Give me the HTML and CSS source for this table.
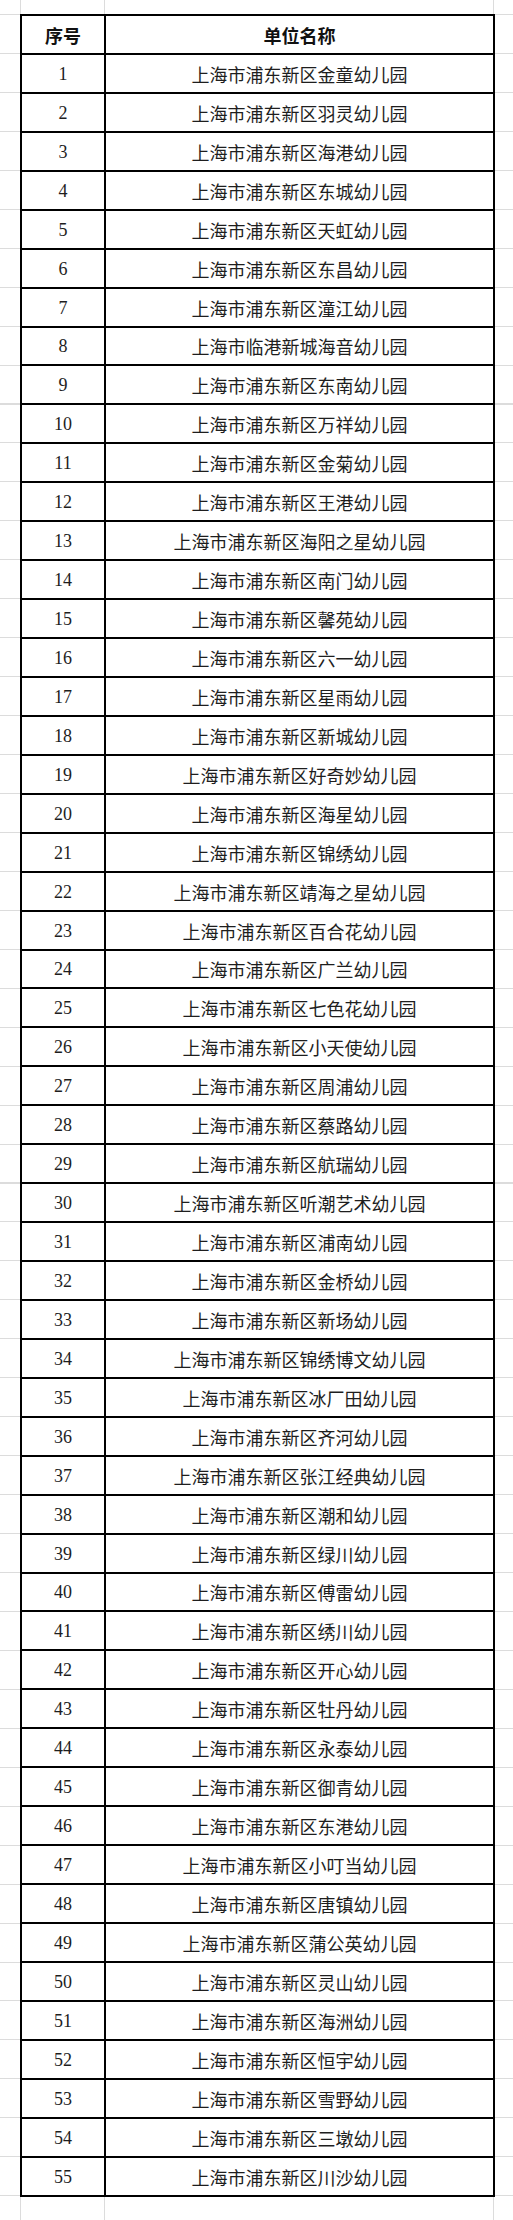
FILE: index.html
```html
<!DOCTYPE html>
<html lang="zh-CN">
<head>
<meta charset="utf-8">
<title>单位名称</title>
<link rel="stylesheet" href="styles.css">
</head>
<body>
<div class="sheet">
  <div class="table">
    <div class="row head"><div class="cell num">序号</div><div class="cell name">单位名称</div></div>
    <div class="row"><div class="cell num">1</div><div class="cell name">上海市浦东新区金童幼儿园</div></div>
    <div class="row"><div class="cell num">2</div><div class="cell name">上海市浦东新区羽灵幼儿园</div></div>
    <div class="row"><div class="cell num">3</div><div class="cell name">上海市浦东新区海港幼儿园</div></div>
    <div class="row"><div class="cell num">4</div><div class="cell name">上海市浦东新区东城幼儿园</div></div>
    <div class="row"><div class="cell num">5</div><div class="cell name">上海市浦东新区天虹幼儿园</div></div>
    <div class="row"><div class="cell num">6</div><div class="cell name">上海市浦东新区东昌幼儿园</div></div>
    <div class="row"><div class="cell num">7</div><div class="cell name">上海市浦东新区潼江幼儿园</div></div>
    <div class="row"><div class="cell num">8</div><div class="cell name">上海市临港新城海音幼儿园</div></div>
    <div class="row"><div class="cell num">9</div><div class="cell name">上海市浦东新区东南幼儿园</div></div>
    <div class="row"><div class="cell num">10</div><div class="cell name">上海市浦东新区万祥幼儿园</div></div>
    <div class="row"><div class="cell num">11</div><div class="cell name">上海市浦东新区金菊幼儿园</div></div>
    <div class="row"><div class="cell num">12</div><div class="cell name">上海市浦东新区王港幼儿园</div></div>
    <div class="row"><div class="cell num">13</div><div class="cell name">上海市浦东新区海阳之星幼儿园</div></div>
    <div class="row"><div class="cell num">14</div><div class="cell name">上海市浦东新区南门幼儿园</div></div>
    <div class="row"><div class="cell num">15</div><div class="cell name">上海市浦东新区馨苑幼儿园</div></div>
    <div class="row"><div class="cell num">16</div><div class="cell name">上海市浦东新区六一幼儿园</div></div>
    <div class="row"><div class="cell num">17</div><div class="cell name">上海市浦东新区星雨幼儿园</div></div>
    <div class="row"><div class="cell num">18</div><div class="cell name">上海市浦东新区新城幼儿园</div></div>
    <div class="row"><div class="cell num">19</div><div class="cell name">上海市浦东新区好奇妙幼儿园</div></div>
    <div class="row"><div class="cell num">20</div><div class="cell name">上海市浦东新区海星幼儿园</div></div>
    <div class="row"><div class="cell num">21</div><div class="cell name">上海市浦东新区锦绣幼儿园</div></div>
    <div class="row"><div class="cell num">22</div><div class="cell name">上海市浦东新区靖海之星幼儿园</div></div>
    <div class="row"><div class="cell num">23</div><div class="cell name">上海市浦东新区百合花幼儿园</div></div>
    <div class="row"><div class="cell num">24</div><div class="cell name">上海市浦东新区广兰幼儿园</div></div>
    <div class="row"><div class="cell num">25</div><div class="cell name">上海市浦东新区七色花幼儿园</div></div>
    <div class="row"><div class="cell num">26</div><div class="cell name">上海市浦东新区小天使幼儿园</div></div>
    <div class="row"><div class="cell num">27</div><div class="cell name">上海市浦东新区周浦幼儿园</div></div>
    <div class="row"><div class="cell num">28</div><div class="cell name">上海市浦东新区蔡路幼儿园</div></div>
    <div class="row"><div class="cell num">29</div><div class="cell name">上海市浦东新区航瑞幼儿园</div></div>
    <div class="row"><div class="cell num">30</div><div class="cell name">上海市浦东新区听潮艺术幼儿园</div></div>
    <div class="row"><div class="cell num">31</div><div class="cell name">上海市浦东新区浦南幼儿园</div></div>
    <div class="row"><div class="cell num">32</div><div class="cell name">上海市浦东新区金桥幼儿园</div></div>
    <div class="row"><div class="cell num">33</div><div class="cell name">上海市浦东新区新场幼儿园</div></div>
    <div class="row"><div class="cell num">34</div><div class="cell name">上海市浦东新区锦绣博文幼儿园</div></div>
    <div class="row"><div class="cell num">35</div><div class="cell name">上海市浦东新区冰厂田幼儿园</div></div>
    <div class="row"><div class="cell num">36</div><div class="cell name">上海市浦东新区齐河幼儿园</div></div>
    <div class="row"><div class="cell num">37</div><div class="cell name">上海市浦东新区张江经典幼儿园</div></div>
    <div class="row"><div class="cell num">38</div><div class="cell name">上海市浦东新区潮和幼儿园</div></div>
    <div class="row"><div class="cell num">39</div><div class="cell name">上海市浦东新区绿川幼儿园</div></div>
    <div class="row"><div class="cell num">40</div><div class="cell name">上海市浦东新区傅雷幼儿园</div></div>
    <div class="row"><div class="cell num">41</div><div class="cell name">上海市浦东新区绣川幼儿园</div></div>
    <div class="row"><div class="cell num">42</div><div class="cell name">上海市浦东新区开心幼儿园</div></div>
    <div class="row"><div class="cell num">43</div><div class="cell name">上海市浦东新区牡丹幼儿园</div></div>
    <div class="row"><div class="cell num">44</div><div class="cell name">上海市浦东新区永泰幼儿园</div></div>
    <div class="row"><div class="cell num">45</div><div class="cell name">上海市浦东新区御青幼儿园</div></div>
    <div class="row"><div class="cell num">46</div><div class="cell name">上海市浦东新区东港幼儿园</div></div>
    <div class="row"><div class="cell num">47</div><div class="cell name">上海市浦东新区小叮当幼儿园</div></div>
    <div class="row"><div class="cell num">48</div><div class="cell name">上海市浦东新区唐镇幼儿园</div></div>
    <div class="row"><div class="cell num">49</div><div class="cell name">上海市浦东新区蒲公英幼儿园</div></div>
    <div class="row"><div class="cell num">50</div><div class="cell name">上海市浦东新区灵山幼儿园</div></div>
    <div class="row"><div class="cell num">51</div><div class="cell name">上海市浦东新区海洲幼儿园</div></div>
    <div class="row"><div class="cell num">52</div><div class="cell name">上海市浦东新区恒宇幼儿园</div></div>
    <div class="row"><div class="cell num">53</div><div class="cell name">上海市浦东新区雪野幼儿园</div></div>
    <div class="row"><div class="cell num">54</div><div class="cell name">上海市浦东新区三墩幼儿园</div></div>
    <div class="row"><div class="cell num">55</div><div class="cell name">上海市浦东新区川沙幼儿园</div></div>
  </div>
</div>
</body>
</html>
```
FILE: styles.css
```css
html, body {
  margin: 0;
  padding: 0;
}

body {
  min-height: 2220px;
  background-color: #ffffff;
  background-image:
    linear-gradient(to right,
      transparent 20px, #dcdcdc 20px, #dcdcdc 21px, transparent 21px,
      transparent 104px, #dcdcdc 104px, #dcdcdc 105px, transparent 105px,
      transparent 493px, #dcdcdc 493px, #dcdcdc 494px, transparent 494px),
    repeating-linear-gradient(to bottom,
      #dcdcdc -24.95px, #dcdcdc -23.95px, transparent -23.95px, transparent 14px);
  color: #1e1e1e;
  font-family: "Noto Sans CJK SC", "Noto Sans", sans-serif;
}

.sheet {
  padding: 14px 0 0 20px;
}

.table {
  width: 475px;
  box-sizing: border-box;
  border: 2px solid #000;
  border-bottom: none;
  background: #fff;
}

.row {
  display: grid;
  grid-template-columns: 84px 1fr;
  height: 38.95px;
  box-sizing: border-box;
  border-bottom: 2px solid #000;
}

.cell {
  display: flex;
  align-items: center;
  justify-content: center;
  font-size: 18px;
  line-height: 22px;
  padding-top: 1px;
  white-space: nowrap;
}

.cell.num {
  border-right: 2px solid #000;
  font-family: "Liberation Serif", "Times New Roman", serif;
}

.cell.name {
  font-family: "Noto Sans CJK SC", "Noto Sans", sans-serif;
}

.head .cell {
  font-family: "Noto Sans CJK SC", "Noto Sans", sans-serif;
  font-weight: 700;
  color: #111;
}
```
